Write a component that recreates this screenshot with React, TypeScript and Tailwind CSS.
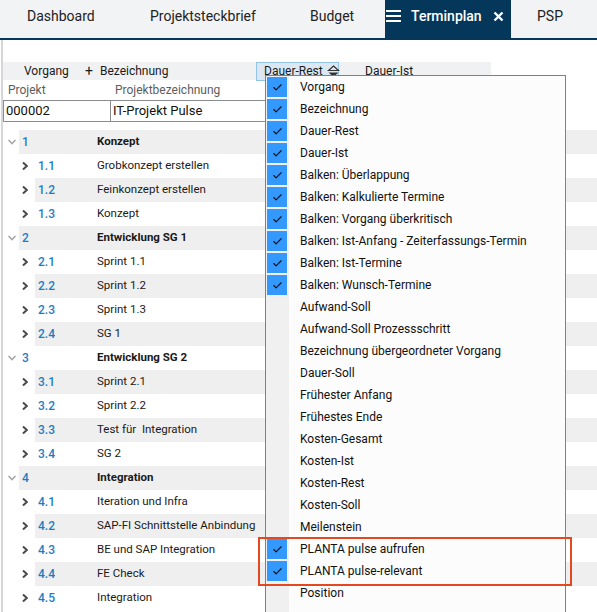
import { Check } from "lucide-react";

const font = { fontFamily: 'Roboto, "Noto Sans", sans-serif' };

type Row = { num: string; name: string; level: 1 | 2 };

const rows: Row[] = [
  { num: "1", name: "Konzept", level: 1 },
  { num: "1.1", name: "Grobkonzept erstellen", level: 2 },
  { num: "1.2", name: "Feinkonzept erstellen", level: 2 },
  { num: "1.3", name: "Konzept", level: 2 },
  { num: "2", name: "Entwicklung SG 1", level: 1 },
  { num: "2.1", name: "Sprint 1.1", level: 2 },
  { num: "2.2", name: "Sprint 1.2", level: 2 },
  { num: "2.3", name: "Sprint 1.3", level: 2 },
  { num: "2.4", name: "SG 1", level: 2 },
  { num: "3", name: "Entwicklung SG 2", level: 1 },
  { num: "3.1", name: "Sprint 2.1", level: 2 },
  { num: "3.2", name: "Sprint 2.2", level: 2 },
  { num: "3.3", name: "Test für  Integration", level: 2 },
  { num: "3.4", name: "SG 2", level: 2 },
  { num: "4", name: "Integration", level: 1 },
  { num: "4.1", name: "Iteration und Infra", level: 2 },
  { num: "4.2", name: "SAP-FI Schnittstelle Anbindung", level: 2 },
  { num: "4.3", name: "BE und SAP Integration", level: 2 },
  { num: "4.4", name: "FE Check", level: 2 },
  { num: "4.5", name: "Integration", level: 2 },
];

const menuItems: [string, boolean][] = [
  ["Vorgang", true],
  ["Bezeichnung", true],
  ["Dauer-Rest", true],
  ["Dauer-Ist", true],
  ["Balken: Überlappung", true],
  ["Balken: Kalkulierte Termine", true],
  ["Balken: Vorgang überkritisch", true],
  ["Balken: Ist-Anfang - Zeiterfassungs-Termin", true],
  ["Balken: Ist-Termine", true],
  ["Balken: Wunsch-Termine", true],
  ["Aufwand-Soll", false],
  ["Aufwand-Soll Prozessschritt", false],
  ["Bezeichnung übergeordneter Vorgang", false],
  ["Dauer-Soll", false],
  ["Frühester Anfang", false],
  ["Frühestes Ende", false],
  ["Kosten-Gesamt", false],
  ["Kosten-Ist", false],
  ["Kosten-Rest", false],
  ["Kosten-Soll", false],
  ["Meilenstein", false],
  ["PLANTA pulse aufrufen", true],
  ["PLANTA pulse-relevant", true],
  ["Position", false],
];

function SortIcon() {
  return (
    <svg width="13" height="13" viewBox="0 0 13 13" className="ml-[4px] shrink-0">
      <path d="M6.5 1 L11.5 5.5 L1.5 5.5 Z" fill="none" stroke="#333" strokeWidth="1.2" />
      <path d="M1.5 7.5 L11.5 7.5 L6.5 12 Z" fill="#333" />
    </svg>
  );
}

function Chevron({ down }: { down: boolean }) {
  return down ? (
    <svg width="10" height="10" viewBox="0 0 10 10">
      <path d="M1.5 3 L5 6.5 L8.5 3" fill="none" stroke="#a8a8a8" strokeWidth="1.6" />
    </svg>
  ) : (
    <svg width="10" height="10" viewBox="0 0 10 10">
      <path d="M3 1.5 L6.8 5 L3 8.5" fill="none" stroke="#4a4a4a" strokeWidth="2" />
    </svg>
  );
}

function TreeRow({ row, shaded }: { row: Row; shaded: boolean }) {
  const lvl1 = row.level === 1;
  return (
    <div className="flex h-[24px] items-center">
      <div className={lvl1 ? "w-[16px] flex justify-center pl-[1px]" : "w-[32px] flex justify-end pr-[5px]"}>
        <Chevron down={lvl1} />
      </div>
      <div className={`flex-1 flex h-full items-center ${shaded ? "bg-[#efefef]" : ""}`}>
        <span
          className={`text-[12px] font-medium text-[#1b7dc1] pl-[3px] ${lvl1 ? "w-[78px]" : "w-[62px]"}`}
        >
          {row.num}
        </span>
        <span className={`text-[11.5px] text-[#1a1a1a] whitespace-pre ${lvl1 ? "font-bold" : ""}`}>{row.name}</span>
      </div>
    </div>
  );
}

export default function App() {
  return (
    <div className="relative w-[597px] h-[612px] overflow-hidden bg-white" style={font}>
      {/* tab bar */}
      <div className="flex h-[40px] bg-[#f2f3f5] border-b-[2px] border-[#05375b] text-[14px] text-[#222]">
        <div className="w-[150px] pl-[27px] pb-[6px] flex items-center">Dashboard</div>
        <div className="w-[160px] pb-[6px] flex items-center">Projektsteckbrief</div>
        <div className="w-[75px] pb-[6px] flex items-center">Budget</div>
        <div className="w-[126px] bg-[#05375b] text-white flex items-center pl-[1px] pb-[6px]">
          <svg width="15" height="14" viewBox="0 0 15 14" className="shrink-0">
            <rect x="0" y="1" width="15" height="2" fill="white" />
            <rect x="0" y="6" width="15" height="2" fill="white" />
            <rect x="0" y="11" width="15" height="2" fill="white" />
          </svg>
          <span className="ml-[10px] w-[82px] font-medium whitespace-nowrap">Terminplan</span>
          <svg width="11" height="11" viewBox="0 0 11 11" className="shrink-0">
            <path d="M1.5 1.5 L9.5 9.5 M9.5 1.5 L1.5 9.5" stroke="white" strokeWidth="2.4" />
          </svg>
        </div>
        <div className="pl-[26px] pb-[6px] flex items-center">PSP</div>
      </div>

      {/* content */}
      <div className="border-l-[2px] border-[#d4d6d9] h-[572px] ml-[1px] pt-[22px]">
        <div className="flex items-center h-[18px] w-[488px] bg-[#f0f1f3] text-[12px] text-[#1a1a1a] whitespace-nowrap">
          <span className="w-[79px] pl-[21px]">Vorgang</span>
          <span className="w-[15px] text-[14px] leading-none pl-[3px]">+</span>
          <span className="w-[159px] pl-[3px]">Bezeichnung</span>
          <div className="h-[19px] w-[83px] flex items-center pl-[7px] bg-[#dbe8f4] border border-[#93c3e6]">
            Dauer-Rest
            <SortIcon />
          </div>
          <span className="ml-[26px]">Dauer-Ist</span>
        </div>
        <div className="flex h-[20px] items-center text-[12px] text-[#5d5d5d]">
          <span className="ml-[5px] w-[107px]">Projekt</span>
          <span>Projektbezeichnung</span>
        </div>
        <div className="flex h-[22px] w-[300px] border border-[#8a8c8f] text-[13px] text-[#111]">
          <div className="w-[107px] border-r border-[#8a8c8f] pl-[2px] flex items-center">000002</div>
          <div className="pl-[2px] flex items-center">IT-Projekt Pulse</div>
        </div>
        <div className="mt-[8px]">
          {rows.map((r, i) => (
            <TreeRow key={r.num} row={r} shaded={i % 2 === 0} />
          ))}
        </div>
      </div>

      {/* column menu */}
      <div className="absolute left-[265px] top-[75px] w-[301px] h-[560px] bg-[#fcfcfc] border border-[#808080] flex flex-col">
        <div className="absolute left-0 top-0 bottom-0 w-[23px] bg-[#f0f0f0]" />
        {menuItems.map(([label, checked]) => (
          <div key={label} className="relative flex h-[22px] items-center">
            <div className="w-[23px] h-full flex items-center pl-[1px]">
              {checked && (
                <div className="w-[20px] h-[20px] bg-[#3399ff] flex items-center justify-center">
                  <Check size={11} strokeWidth={2.5} color="#111" />
                </div>
              )}
            </div>
            <span className="ml-[11px] text-[12px] text-[#111] whitespace-nowrap">{label}</span>
          </div>
        ))}
      </div>

      {/* highlight */}
      <div className="absolute left-[258px] top-[537px] w-[314px] h-[49px] border-[2px] border-[#e5481f]" />
    </div>
  );
}
